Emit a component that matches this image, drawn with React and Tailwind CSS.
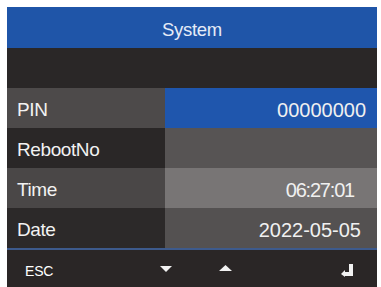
import React from 'react';

const rows = [
  { label: 'PIN', value: '00000000', left: 'bg-[#4d4a4a]', right: 'bg-[#1f56ad]', pad: 'pr-[11px]', track: 'tracking-[0px]' },
  { label: 'RebootNo', value: '', left: 'bg-[#2a2727]', right: 'bg-[#575454]', pad: 'pr-[12px]', track: 'tracking-[0px]' },
  { label: 'Time', value: '06:27:01', left: 'bg-[#4a4747]', right: 'bg-[#787575]', pad: 'pr-[23px]', track: 'tracking-[-1.2px]' },
  { label: 'Date', value: '2022-05-05', left: 'bg-[#2c2929]', right: 'bg-[#545151]', pad: 'pr-[16px]', track: 'tracking-[0px]' },
];

function App() {
  return (
    <div className="w-[381px] h-[287px] bg-white pt-[7px] pl-[7px] pr-[4px] overflow-hidden" style={{ fontFamily: '"Liberation Sans", Arial, sans-serif' }}>
      <div className="flex flex-col h-[280px] bg-[#2a2626]">
        <div className="h-[41px] bg-[#1f55a8] flex items-center justify-center pt-[5px] text-[#e6ecf7] text-[18.5px] tracking-[-0.3px]">
          System
        </div>
        <div className="h-[40px] bg-[#2a2727]" />
        {rows.map((row) => (
          <div key={row.label} className="flex h-[40px]">
            <div className={`w-[158px] ${row.left} flex items-center pl-[10px] pt-[5px] text-[#f2f2f2] text-[19px] tracking-[-0.4px]`}>
              {row.label}
            </div>
            <div className={`flex-1 ${row.right} ${row.pad} ${row.track} flex items-center justify-end pt-[4px] text-[#f0f0f0] text-[20px]`}>
              {row.value}
            </div>
          </div>
        ))}
        <div className="h-[2px] bg-[#3d5a8c]" />
        <div className="flex-1 flex items-center text-white text-[14px] relative">
          <span className="pl-[18px] pt-[6px] tracking-[-0.2px]">ESC</span>
          <svg className="absolute left-[153px] top-[16px]" width="12" height="6" viewBox="0 0 12 6">
            <polygon points="0,0 12,0 6,6" fill="#f2f2f2" />
          </svg>
          <svg className="absolute left-[212px] top-[15px]" width="13" height="6" viewBox="0 0 13 6">
            <polygon points="0,6 13,6 6.5,0" fill="#f2f2f2" />
          </svg>
          <svg className="absolute left-[334px] top-[14px]" width="12" height="13" viewBox="0 0 12 13">
            <path d="M8 0h4v12H3V8h5z" fill="#f2f2f2" />
            <polygon points="0,10 4,6 4,13" fill="#f2f2f2" />
          </svg>
        </div>
      </div>
    </div>
  );
}

export default App;
